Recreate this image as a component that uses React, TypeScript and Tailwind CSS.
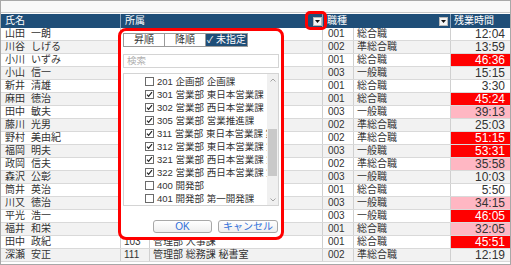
import React from 'react';

type Row = {
  family: string;
  given: string;
  deptCode: string;
  dept: string;
  jobCode: string;
  job: string;
  time: string;
  level?: 'red' | 'pink';
};

const JOBS: Record<string, string> = { '001': '総合職', '002': '準総合職', '003': '一般職' };

// 所属 is left blank where the filter popup covers it
const raw: [string, string, string, string, string, string, Row['level']?][] = [
  ['山田', '一朗', '', '', '001', '12:04'],
  ['川谷', 'しげる', '', '', '002', '13:59'],
  ['小川', 'いずみ', '', '', '001', '46:36', 'red'],
  ['小山', '信一', '', '', '003', '15:15'],
  ['新井', '清雄', '', '', '001', '3:30'],
  ['麻田', '徳治', '', '', '001', '45:24', 'red'],
  ['田中', '敏夫', '', '', '003', '39:13', 'pink'],
  ['藤川', '光男', '', '', '002', '25:03'],
  ['野村', '美由紀', '', '', '002', '51:15', 'red'],
  ['福岡', '明夫', '', '', '003', '53:31', 'red'],
  ['政岡', '信夫', '', '', '002', '35:58', 'pink'],
  ['森沢', '公彰', '', '', '003', '10:03'],
  ['筒井', '英治', '', '', '001', '5:50'],
  ['川又', '徳治', '', '', '003', '34:15', 'pink'],
  ['平光', '浩一', '', '', '003', '46:05', 'red'],
  ['福井', '和栄', '', '', '001', '32:05', 'pink'],
  ['田中', '政紀', '103', '管理部 人事課', '001', '45:51', 'red'],
  ['深瀬', '安正', '111', '管理部 総務課 秘書室', '002', '12:19'],
];

const rows: Row[] = raw.map(([family, given, deptCode, dept, jobCode, time, level]) => ({
  family,
  given,
  deptCode,
  dept,
  jobCode,
  job: JOBS[jobCode],
  time,
  level,
}));

const filterItems = [
  { label: '201 企画部 企画課', checked: false },
  { label: '301 営業部 東日本営業課', checked: true },
  { label: '302 営業部 西日本営業課', checked: true },
  { label: '305 営業部 営業推進課', checked: true },
  { label: '311 営業部 東日本営業課 第一営業係', checked: true },
  { label: '312 営業部 東日本営業課 第二営業係', checked: true },
  { label: '321 営業部 西日本営業課 第一営業係', checked: true },
  { label: '322 営業部 西日本営業課 第二営業係', checked: true },
  { label: '400 開発部', checked: false },
  { label: '401 開発部 第一開発課', checked: false },
];

const FilterButton = ({ className = '' }: { className?: string }) => (
  <div className={`w-[9px] h-[9px] bg-[#f4f4f4] border border-[#b8b8b8] flex items-center justify-center ${className}`}>
    <svg width="5" height="3" viewBox="0 0 5 3">
      <path d="M0 0h5L2.5 3z" fill="#111" />
    </svg>
  </div>
);

const Checkbox = ({ checked }: { checked: boolean }) => (
  <div className="w-[9px] h-[9px] shrink-0 border border-[#6b6b6b] bg-white flex items-center justify-center">
    {checked && (
      <svg width="7" height="7" viewBox="0 0 7 7">
        <path d="M1 3.6l1.6 1.7L6 1.2" fill="none" stroke="#222" strokeWidth="1.2" />
      </svg>
    )}
  </div>
);

const Chevron = ({ up }: { up?: boolean }) => (
  <svg width="6" height="4" viewBox="0 0 6 4">
    <path d={up ? 'M0.5 3.5L3 1l2.5 2.5' : 'M0.5 0.5L3 3l2.5-2.5'} fill="none" stroke="#9a9a9a" strokeWidth="0.9" />
  </svg>
);

const FilterPopup = () => (
  <div className="absolute left-[117px] top-[27px] w-[166px] h-[212px] border-[3px] border-[#ff0000] rounded-[8px] bg-white px-[2px] pt-[2px] flex flex-col">
    {/* sort */}
    <div className="flex h-[14px] w-[125px] border border-[#9a9a9a] text-[10px]">
      <div className="w-[41px] border-r border-[#9a9a9a] flex items-center justify-center text-[#333]">昇順</div>
      <div className="w-[41px] border-r border-[#9a9a9a] flex items-center justify-center text-[#333]">降順</div>
      <div className="flex-1 bg-[#1f4e78] text-white flex items-center justify-center gap-[3px] whitespace-nowrap">
        <span className="text-[9px]">✓</span>未指定
      </div>
    </div>

    {/* search */}
    <div className="mt-[7px] h-[14px] border border-[#d4d4d4] flex items-center pl-[3px] text-[9.5px] text-[#b0b0b0]">検索</div>

    {/* list */}
    <div className="mt-[5px] h-[133px] border border-[#d4d4d4] flex overflow-hidden">
      <div className="flex-1 overflow-hidden pt-[1px]">
        {filterItems.map((it) => (
          <div key={it.label} className="h-[13px] flex items-center pl-[21px] whitespace-nowrap">
            <Checkbox checked={it.checked} />
            <span className="ml-[3px] text-[9.5px] text-[#333]">{it.label}</span>
          </div>
        ))}
      </div>
      <div className="w-[11px] bg-[#f0f0f0] flex flex-col">
        <div className="h-[11px] flex items-center justify-center">
          <Chevron up />
        </div>
        <div className="flex-1">
          <div className="mt-[44px] h-[47px] mx-[1px] bg-[#c9c9c9]" />
        </div>
        <div className="h-[11px] flex items-center justify-center">
          <Chevron />
        </div>
      </div>
    </div>

    {/* actions */}
    <div className="mt-[14px] flex justify-end gap-[6px] pr-[1px]">
      <button className="w-[59px] h-[13px] rounded-[3px] border border-[#a8a8a8] bg-gradient-to-b from-white to-[#eeeeee] text-[10px] leading-none text-[#2f6fd8]">
        OK
      </button>
      <button className="w-[60px] h-[13px] rounded-[3px] border border-[#a8a8a8] bg-gradient-to-b from-white to-[#eeeeee] text-[10px] leading-none text-[#2f6fd8]">
        キャンセル
      </button>
    </div>
  </div>
);

export default function App() {
  return (
    <div className="relative w-[511px] h-[265px] overflow-hidden bg-white border border-[#a8a8a8] text-[10px] leading-none text-[#333] font-['Liberation_Sans','Noto_Sans_CJK_JP',sans-serif]">
      <div className="h-[12px] bg-[#f8f8f8] border-b border-[#c8c8c8]" />
      <div className="h-[1px]" />

      {/* header */}
      <div className="flex h-[14px] bg-[#1f4e78] text-white">
        <div className="w-[120px] border-r border-[#8aa2bb] flex items-center pl-[4px]">氏名</div>
        <div className="w-[202px] border-r border-[#8aa2bb] flex items-center pl-[4px]">
          <span className="flex-1">所属</span>
          <FilterButton className="mr-[0px]" />
        </div>
        <div className="w-[128px] border-r border-[#8aa2bb] flex items-center pl-[4px]">
          <span className="flex-1">職種</span>
          <FilterButton className="mr-[2px]" />
        </div>
        <div className="flex-1 flex items-center pl-[3px]">残業時間</div>
      </div>

      {/* body */}
      {rows.map((r, i) => {
        const bg = i % 2 === 0 ? 'bg-white' : 'bg-[#f2f2f2]';
        const timeCls =
          r.level === 'red'
            ? 'bg-[#ff0000] text-white'
            : r.level === 'pink'
            ? 'bg-[#ffb7c3] text-[#333]'
            : '';
        return (
          <div key={i} className={`flex h-[13px] border-b border-[#d9d9d9] ${bg}`}>
            <div className="w-[120px] border-r border-[#d0d0d0] flex items-center pl-[4px] whitespace-nowrap">
              {r.family}
              <span className="ml-[6px]">{r.given}</span>
            </div>
            <div className="w-[29px] border-r border-[#d0d0d0] flex items-center pl-[3px]">{r.deptCode}</div>
            <div className="w-[173px] border-r border-[#d0d0d0] flex items-center pl-[3px] whitespace-nowrap">
              {r.dept}
            </div>
            <div className="w-[31px] border-r border-[#d0d0d0] flex items-center pl-[5px]">{r.jobCode}</div>
            <div className="w-[97px] border-r border-[#d0d0d0] flex items-center pl-[3px]">{r.job}</div>
            <div className={`flex-1 flex items-center justify-end pr-[5px] text-[12px] leading-[12px] ${timeCls}`}>
              {r.time}
            </div>
          </div>
        );
      })}

      <FilterPopup />
      <div className="absolute left-[304px] top-[10px] w-[22px] h-[19px] border-[3px] border-[#ff0000] rounded-[5px]" />
    </div>
  );
}
